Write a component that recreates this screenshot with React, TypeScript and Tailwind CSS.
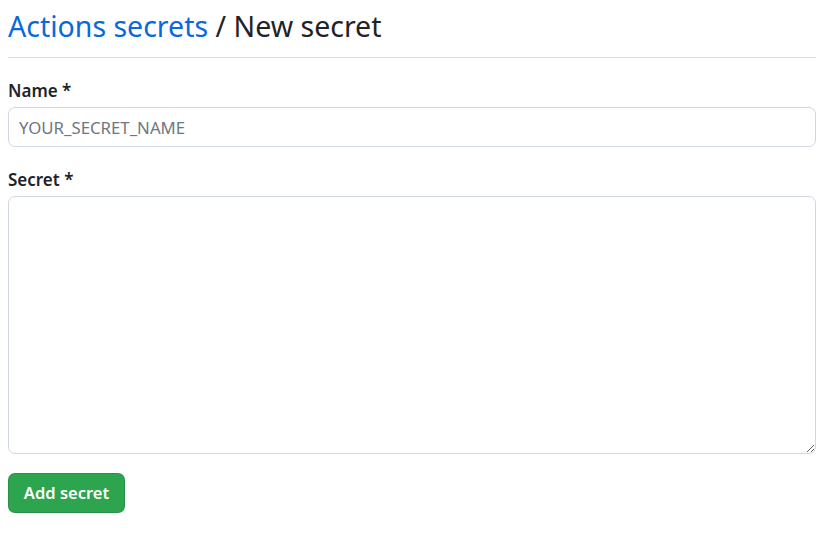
export default function App() {
  return (
    <div
      className="min-h-screen bg-white px-2 text-[#1f2328]"
      style={{ fontFamily: '"Noto Sans", "Liberation Sans", sans-serif' }}
    >
      <div className="flex h-[58px] items-end border-b border-[#d8dee4] pb-[11px]">
        <h2 className="text-[28.5px] font-normal leading-[40px]">
          <a href="#" className="text-[#0969da]">
            Actions secrets
          </a>{' '}
          / New secret
        </h2>
      </div>

      <form className="pt-[20px]">
        <label className="block text-[17px] font-semibold leading-[26px]">Name *</label>
        <input
          type="text"
          placeholder="YOUR_SECRET_NAME"
          className="mt-[3px] block h-[40px] w-full rounded-[7px] border border-[#d0d7de] px-[10px] text-[16.8px] placeholder:text-[#6e7781] focus:outline-none"
        />

        <label className="mt-[20px] block text-[17px] font-semibold leading-[26px]">Secret *</label>
        <textarea className="mt-[3px] block h-[258px] w-full rounded-[7px] border border-[#d0d7de] px-[10px] py-2 text-[16px] focus:outline-none" />

        <button
          type="button"
          className="mt-[19px] h-[40px] w-[117px] rounded-[7px] border border-[#1b1f2426] bg-[#2da44e] text-[16.5px] font-semibold text-white"
        >
          Add secret
        </button>
      </form>
    </div>
  );
}
